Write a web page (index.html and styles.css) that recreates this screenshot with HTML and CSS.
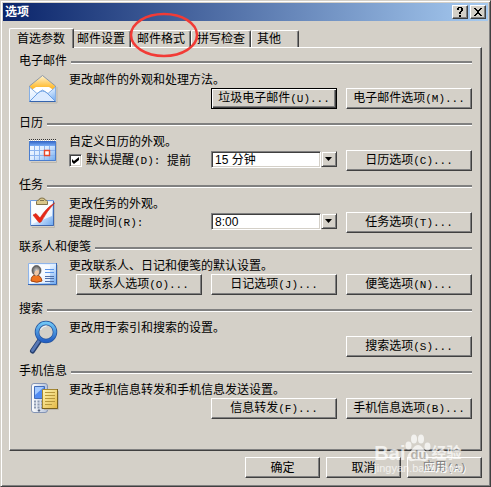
FILE: index.html
```
<!DOCTYPE html>
<html lang="zh-CN">
<head>
  <meta charset="UTF-8">
  <meta name="viewport" content="width=device-width, initial-scale=1.0">
  <title>选项</title>
  <link rel="stylesheet" href="styles.css">
</head>
<body>
  <div class="dialog">
    <div class="title-bar">
      <h1>选项</h1>
      <button class="title-btn" aria-label="帮助">
        <svg width="8" height="10" viewBox="0 0 8 10"><path d="M1 1h1V0h4v1h1v3H6v1H5v2H3V5h1V4h1V1H3v2H1zM3 8h2v2H3z" fill="#000"/></svg>
      </button>
      <button class="title-btn close-btn" aria-label="关闭">
        <svg width="8" height="8" viewBox="0 0 8 8"><path d="M0 0h2v1h1v1h2V1h1V0h2v1H7v1H6v1H5v2h1v1h1v1h1v1H6V7H5V6H3v1H2v1H0V7h1V6h1V5h1V3H2V2H1V1H0z" fill="#000"/></svg>
      </button>
    </div>

    <!-- Tabs -->
    <div class="tabs" role="tablist">
      <button class="tab active" role="tab" aria-selected="true">首选参数</button>
      <button class="tab" role="tab">邮件设置</button>
      <button class="tab marked" role="tab">邮件格式
        <svg class="mark" width="72" height="48" viewBox="0 0 72 48"><ellipse cx="36" cy="24" rx="33" ry="21" fill="none" stroke="#f23b36" stroke-width="2.5"/></svg>
      </button>
      <button class="tab" role="tab">拼写检查</button>
      <button class="tab tab-short" role="tab">其他</button>
    </div>

    <div class="panel">
      <section class="group">
        <h2>电子邮件</h2>
        <div class="group-body">
          <svg class="icon" viewBox="0 0 32 34">
            <defs>
              <linearGradient id="mailBack" x1="0" y1="0" x2="0" y2="1"><stop offset="0" stop-color="#fff3cf"/><stop offset=".45" stop-color="#ffbd35"/><stop offset="1" stop-color="#f0a020"/></linearGradient>
              <linearGradient id="blueSheet" x1="0" y1="0" x2="1" y2="1"><stop offset="0" stop-color="#ffffff"/><stop offset=".5" stop-color="#dcecff"/><stop offset="1" stop-color="#6aa6ef"/></linearGradient>
            </defs>
            <path d="M4 31h26V15" fill="none" stroke="#bbb7ae" stroke-width="1"/>
            <path d="M2.500 14 15.500 3.500 28.500 14V29.500H2.500z" fill="url(#mailBack)" stroke="#8c98a8"/>
            <path d="M6 17 9 15h13l3 2v6H6z" fill="#fff"/>
            <path d="M2.500 15 10 21.500 15.500 18 21 21.500 28.500 15V29.500H2.500z" fill="url(#blueSheet)" stroke="#86afe4"/>
            <path d="M3 29 11 21Q15.500 17 20 21L28 29" fill="#dcebff" stroke="#6b9fe2"/>
            <path d="M2.500 29.500h26" stroke="#3564ad"/>
          </svg>
          <div class="group-main">
            <p>更改邮件的外观和处理方法。</p>
            <div class="row">
              <button class="btn default">垃圾电子邮件<span class="key">(U)...</span></button>
              <button class="btn">电子邮件选项<span class="key">(M)...</span></button>
            </div>
          </div>
        </div>
      </section>

      <section class="group">
        <h2>日历</h2>
        <div class="group-body">
          <svg class="icon" viewBox="0 0 32 34">
            <defs><linearGradient id="calHead" x1="0" y1="0" x2="0" y2="1"><stop offset="0" stop-color="#2f62c4"/><stop offset="1" stop-color="#79adf5"/></linearGradient></defs>
            <path d="M4 28.500h25.500V8" fill="none" stroke="#bbb7ae"/>
            <path d="M2 7h27v20H2z" fill="url(#blueSheet)"/>
            <path d="M2 7h27v5H2z" fill="url(#calHead)"/>
            <path d="M2 5.500h27" stroke="#333" stroke-dasharray="1 1"/>
            <path d="M2 6.500h27" stroke="#fff" stroke-dasharray="1 1"/>
            <path d="M7.500 12v15M12.500 12v15M17.500 12v15M22.500 12v15M2 16.500h27M2 21.500h27" stroke="#8cb4ee" fill="none"/>
            <path d="M2.500 7v19.500h26V7" fill="none" stroke="#4a7dce"/>
            <path d="M17.500 16.500h5v5h-5z" fill="#fff" stroke="#e8482c" stroke-width="1.400"/>
          </svg>
          <div class="group-main">
            <p>自定义日历的外观。</p>
            <div class="row">
              <div class="field-label">
                <input type="checkbox" id="remind" checked>
                <label for="remind">默认提醒<span class="key">(D):&nbsp;</span></label><label for="ahead">提前</label>
              </div>
              <div class="combo">
                <select id="ahead"><option>15 分钟</option></select>
                <span class="combo-arrow"></span>
              </div>
              <button class="btn">日历选项<span class="key">(C)...</span></button>
            </div>
          </div>
        </div>
      </section>

      <section class="group">
        <h2>任务</h2>
        <div class="group-body">
          <svg class="icon" viewBox="0 0 32 34">
            <path d="M5 31.500h22.500V6" fill="none" stroke="#bbb7ae"/>
            <path d="M3.500 4.500h23v25h-23z" fill="url(#blueSheet)" stroke="#6d9bde"/>
            <path d="M5 6h20v14L5 28z" fill="#fff" opacity=".8"/>
            <path d="M26.500 5v24.500H4" fill="none" stroke="#3f68b0"/>
            <path d="M9.500 8.500V5.500Q10 4 12 4 12 2 15 2t3 2q2 0 2.500 1.500v3z" fill="#d9c78b" stroke="#82734a"/>
            <path d="M13 4.500h4" stroke="#82734a"/>
            <path d="M6 19 9 17.500 13 22Q19 12 27.500 7 20 15 14 26L12 26.500z" fill="#e82818" stroke="#c9200f" stroke-width=".6"/>
          </svg>
          <div class="group-main">
            <p>更改任务的外观。</p>
            <div class="row">
              <div class="field-label"><label for="time">提醒时间<span class="key">(R):</span></label></div>
              <div class="combo">
                <select id="time"><option>8:00</option></select>
                <span class="combo-arrow"></span>
              </div>
              <button class="btn">任务选项<span class="key">(T)...</span></button>
            </div>
          </div>
        </div>
      </section>

      <section class="group">
        <h2>联系人和便笺</h2>
        <div class="group-body">
          <svg class="icon" viewBox="0 0 32 34">
            <defs><radialGradient id="hair"><stop offset="0" stop-color="#d0d0d0"/><stop offset="1" stop-color="#555"/></radialGradient></defs>
            <path d="M3 27.500h27.500V7" fill="none" stroke="#bbb7ae"/>
            <path d="M1.500 5.500h28v21h-28z" fill="url(#blueSheet)" stroke="#8fb5ea"/>
            <path d="M3 7h20v18H3z" fill="#fff" opacity=".7"/>
            <path d="M29.500 5v21.500H1" fill="none" stroke="#3465b2"/>
            <path d="M4 23q0-6 5-6t6 6q-5 2.500-11 0z" fill="#ef7420" stroke="#a3420c"/>
            <ellipse cx="9.500" cy="12.500" rx="4.500" ry="5" fill="url(#hair)" stroke="#4b4b4b" stroke-width=".7"/>
            <path d="M8 13q3 0 3-2 2 3 0 6l-2 1-2-2z" fill="#f0c7a5"/>
            <path d="M18 11.500h9M18 14.500h9" stroke="#5c96ea"/>
            <path d="M18 18.500h9M18 20.500h9M18 23.500h9" stroke="#506fa8"/>
          </svg>
          <div class="group-main">
            <p>更改联系人、日记和便笺的默认设置。</p>
            <div class="row">
              <button class="btn">联系人选项<span class="key">(O)...</span></button>
              <button class="btn">日记选项<span class="key">(J)...</span></button>
              <button class="btn">便笺选项<span class="key">(N)...</span></button>
            </div>
          </div>
        </div>
      </section>

      <section class="group">
        <h2>搜索</h2>
        <div class="group-body">
          <svg class="icon" viewBox="0 0 32 34">
            <defs><linearGradient id="ring" x1="0" y1="0" x2="0" y2="1"><stop offset="0" stop-color="#6fc6f5"/><stop offset="1" stop-color="#2460c4"/></linearGradient></defs>
            <path d="M13 20 5.500 31" stroke="#263f6e" stroke-width="5" stroke-linecap="round"/>
            <path d="M12.500 20 5.500 30.500" stroke="#5878b5" stroke-width="3" stroke-linecap="round"/>
            <circle cx="19" cy="12" r="9" fill="#d4d0c8" fill-opacity=".5" stroke="#24549e" stroke-width="4.500"/>
            <circle cx="19" cy="12" r="9" fill="none" stroke="url(#ring)" stroke-width="3"/>
            <path d="M13.500 10q2-4 6-4" stroke="#e9f5ff" fill="none"/>
          </svg>
          <div class="group-main">
            <p>更改用于索引和搜索的设置。</p>
            <div class="row">
              <button class="btn">搜索选项<span class="key">(S)...</span></button>
            </div>
          </div>
        </div>
      </section>

      <section class="group">
        <h2>手机信息</h2>
        <div class="group-body">
          <svg class="icon" viewBox="0 0 32 34">
            <defs>
              <linearGradient id="phone" x1="0" y1="0" x2="1" y2="0"><stop offset="0" stop-color="#fff"/><stop offset="1" stop-color="#b5c2da"/></linearGradient>
              <linearGradient id="note" x1="0" y1="0" x2="1" y2="1"><stop offset="0" stop-color="#fff6b5"/><stop offset="1" stop-color="#e3b843"/></linearGradient>
            </defs>
            <rect x="4.500" y="1.500" width="16" height="29" rx="2.500" fill="url(#phone)" stroke="#8494b4"/>
            <path d="M7.500 4.500h10v12h-10z" fill="#508bf3" stroke="#426cb8"/>
            <path d="M8 5h9L8 13z" fill="#a4caff"/>
            <path d="M7 19.500h9M7 22.500h9M7 25.500h9" stroke="#8c99b2" stroke-width="2" stroke-dasharray="2 1.500"/>
            <path d="M12 27l1.500 1.500L12 30l-1.500-1.500z" fill="#566580"/>
            <path d="M17 27.500h14.500V9" stroke="#bbb7ae" fill="none"/>
            <path d="M15.500 7.500h15v19h-15z" fill="url(#note)" stroke="#a48732"/>
            <path d="M18 10.500h10M18 13.500h10M18 16.500h10M18 19.500h10M18 22.500h7" stroke="#b8983c"/>
            <path d="M30.500 7v19.500H15" fill="none" stroke="#79601c"/>
          </svg>
          <div class="group-main">
            <p>更改手机信息转发和手机信息发送设置。</p>
            <div class="row">
              <button class="btn">信息转发<span class="key">(F)...</span></button>
              <button class="btn">手机信息选项<span class="key">(B)...</span></button>
            </div>
          </div>
        </div>
      </section>
    </div>

    <div class="footer">
      <button class="btn btn-small">确定</button>
      <button class="btn btn-small">取消</button>
      <button class="btn btn-small" disabled>应用<span class="key">(A)</span></button>
    </div>

    <div class="watermark">
      <div class="wm-logo">
        <span>Bai</span>
        <span class="paw">
          <svg width="26" height="28" viewBox="0 0 26 28" fill="#fff">
            <ellipse cx="3.500" cy="11.500" rx="3" ry="4"/>
            <ellipse cx="9" cy="5" rx="3" ry="4.500"/>
            <ellipse cx="16" cy="5" rx="3" ry="4.500"/>
            <ellipse cx="22.500" cy="12.500" rx="3" ry="4"/>
            <path d="M13 11c4 0 5 4 8 7 5 5 2 10-3 9-3-.6-7-.6-10 0-5 1-8-4-3-9 3-3 4-7 8-7z"/>
          </svg>
          <span class="paw-text">du</span>
        </span>
        <span class="wm-cn">经验</span>
      </div>
      <div class="wm-url">jingyan.baidu.com</div>
    </div>
  </div>
</body>
</html>
```
FILE: styles.css
```
:root {
  --face: #d4d0c8;
  --light: #fff;
  --shadow: #808080;
  --dark: #404040;
}

* {
  box-sizing: border-box;
  margin: 0;
  padding: 0;
}

body,
button,
select {
  font-family: "Liberation Sans", "Noto Sans CJK SC", sans-serif;
  font-size: 12px;
  line-height: 14px;
  color: #000;
}

body {
  background: var(--face);
}

button {
  background: var(--face);
  white-space: nowrap;
}

/* Window */
.dialog {
  position: relative;
  min-height: 100vh;
  padding: 2px;
  background: var(--face);
  border: 1px solid;
  border-color: var(--face) var(--dark) var(--dark) var(--face);
  box-shadow: inset 1px 1px var(--light), inset -1px -1px var(--shadow);
}

.title-bar {
  display: flex;
  align-items: center;
  height: 18px;
  padding: 0 2px;
  background: linear-gradient(to right, #0a246a, #a6caf0);
}
.title-bar h1 {
  flex: 1;
  font-size: 12px;
  line-height: 18px;
  color: #fff;
}

.title-btn {
  display: flex;
  align-items: center;
  justify-content: center;
  width: 16px;
  height: 14px;
  border: 1px solid;
  border-color: var(--light) var(--dark) var(--dark) var(--light);
  box-shadow: inset -1px -1px var(--shadow);
}
.close-btn {
  margin-left: 2px;
}

/* Tabs */
.tabs {
  display: flex;
  align-items: flex-end;
  padding: 7px 6px 0;
}
.tab {
  width: 60px;
  height: 17px;
  padding-left: 5px;
  text-align: left;
  border: 1px solid;
  border-color: var(--light) var(--dark) transparent var(--light);
  border-bottom: none;
  border-radius: 2px 2px 0 0;
  box-shadow: inset -1px 0 var(--shadow);
}
.tab.active {
  position: relative;
  z-index: 1;
  width: 65px;
  height: 20px;
  margin-right: -3px;
  margin-bottom: -1px;
  padding-left: 7px;
}
.tab-short {
  width: 48px;
}
.marked {
  position: relative;
}
.mark {
  position: absolute;
  left: -4px;
  top: -20px;
  z-index: 2;
  pointer-events: none;
}

.panel {
  margin: 0 6px;
  padding: 6px 9px 24px;
  border: 1px solid;
  border-color: var(--light) var(--dark) var(--dark) var(--light);
  box-shadow: inset -1px -1px var(--shadow);
}

/* Groups */
.group {
  padding-bottom: 7px;
}
.group h2 {
  display: flex;
  align-items: center;
  gap: 4px;
  font-size: 12px;
  font-weight: normal;
  line-height: 14px;
}
.group h2::after {
  content: "";
  flex: 1;
  height: 2px;
  margin-top: 2px;
  background: var(--shadow);
  border-bottom: 1px solid var(--light);
}
.group-body {
  display: flex;
  gap: 10px;
  padding: 4px 0 0 8px;
}
.icon {
  flex: none;
  width: 32px;
  height: 34px;
}
.group-main {
  flex: 1;
}
.group-main p {
  line-height: 16px;
}
.row {
  display: flex;
  justify-content: flex-end;
  gap: 9px;
}

.btn {
  width: 126px;
  height: 21px;
  border: 1px solid;
  border-color: var(--light) var(--dark) var(--dark) var(--light);
  box-shadow: inset -1px -1px var(--shadow);
}
.btn.default {
  border-color: #000;
  box-shadow: inset 1px 1px var(--light), inset -1px -1px var(--dark), inset -2px -2px var(--shadow);
}
.btn:disabled {
  color: var(--shadow);
  text-shadow: 1px 1px var(--light);
}
.btn-small {
  width: 75px;
}
.key {
  font-family: "Liberation Mono", monospace;
  font-size: 11px;
}

/* Fields */
.field-label {
  display: flex;
  flex: 1;
  align-items: center;
  white-space: nowrap;
}
input[type="checkbox"] {
  appearance: none;
  width: 13px;
  height: 13px;
  margin-right: 4px;
  background: #fff;
  border: 1px solid;
  border-color: var(--shadow) var(--light) var(--light) var(--shadow);
  box-shadow: inset 1px 1px var(--dark), inset -1px -1px var(--face);
}
input[type="checkbox"]:checked::before {
  content: "";
  display: block;
  width: 7px;
  height: 7px;
  margin: 2px;
  background: #000;
  clip-path: polygon(0 28%, 28% 57%, 100% 0, 100% 43%, 28% 100%, 0 72%);
}
.combo {
  position: relative;
  width: 126px;
  height: 17px;
  margin-top: 1px;
}
.combo select {
  appearance: none;
  display: block;
  width: 110px;
  height: 17px;
  padding-left: 3px;
  background: #fff;
  border: 1px solid;
  border-color: var(--shadow) var(--light) var(--light) var(--shadow);
  border-radius: 0;
  box-shadow: inset 1px 1px var(--dark), inset -1px -1px var(--face);
}
.combo-arrow {
  position: absolute;
  top: 0;
  right: 0;
  width: 16px;
  height: 16px;
  background: var(--face);
  border: 1px solid;
  border-color: var(--face) var(--dark) var(--dark) var(--face);
  box-shadow: inset 1px 1px var(--light), inset -1px -1px var(--shadow);
  pointer-events: none;
}
.combo-arrow::before {
  content: "";
  display: block;
  width: 7px;
  height: 4px;
  margin: 5px 3px;
  background: #000;
  clip-path: polygon(0 0, 100% 0, 50% 100%);
}

.footer {
  display: flex;
  justify-content: flex-end;
  gap: 6px;
  padding: 6px 6px 5px;
}

/* Watermark over the lower right corner */
.watermark {
  position: absolute;
  right: 27px;
  bottom: 12px;
  color: #fff;
  opacity: 0.7;
  pointer-events: none;
}
.wm-logo {
  display: flex;
  align-items: flex-end;
  font-size: 20px;
  font-weight: bold;
  line-height: 18px;
}
.paw {
  position: relative;
  height: 28px;
}
.paw-text {
  position: absolute;
  left: 5px;
  bottom: 1px;
  font-size: 13px;
  line-height: 13px;
  color: #aaa69e;
}
.wm-cn {
  font-size: 15px;
}
.wm-url {
  font-size: 11px;
  line-height: 12px;
}
```
